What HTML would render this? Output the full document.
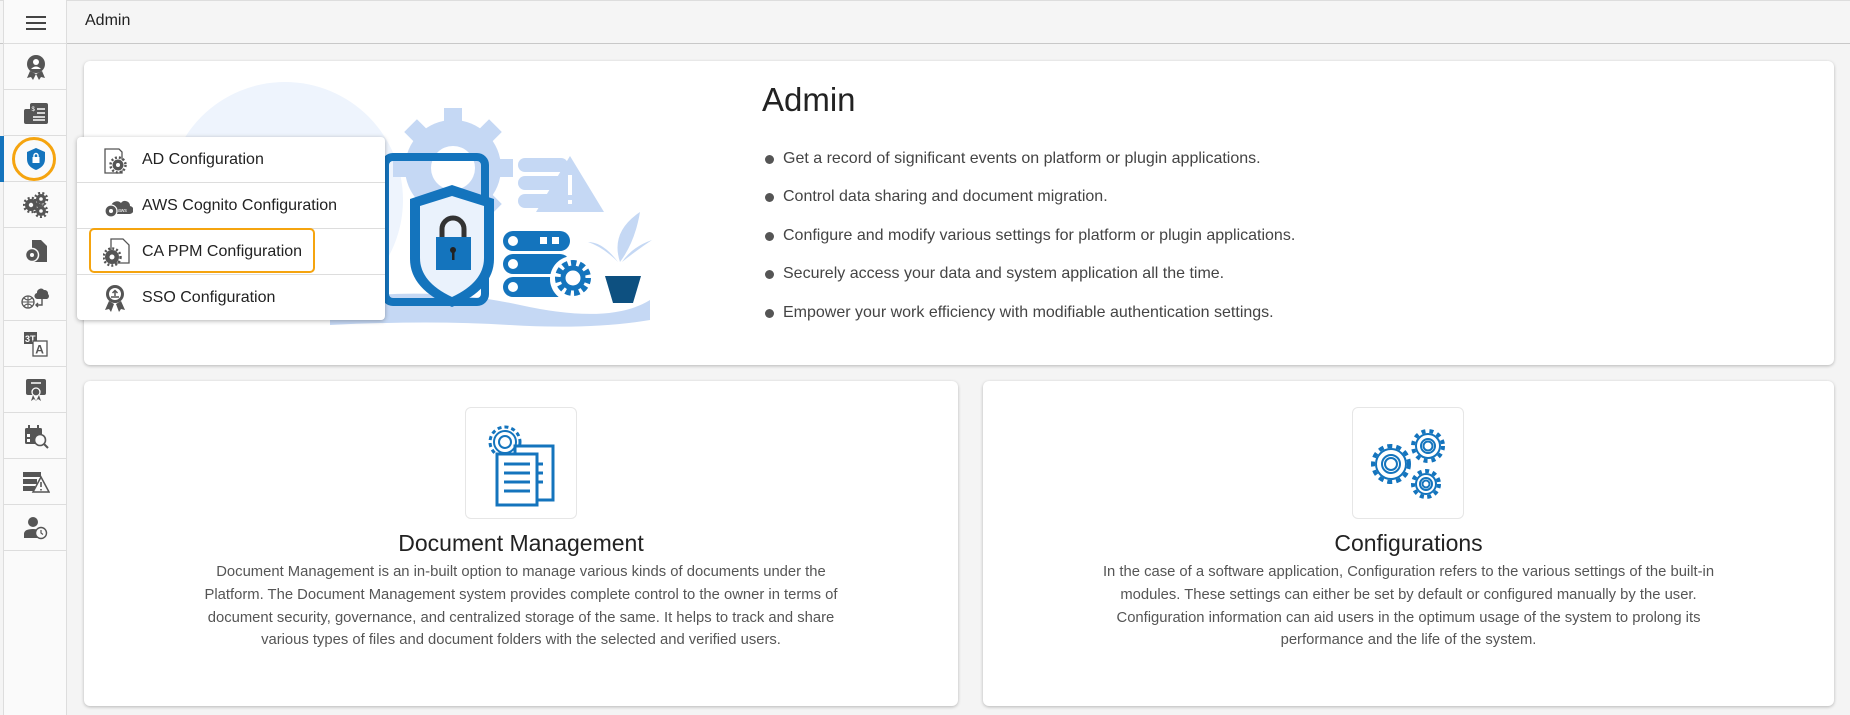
<!DOCTYPE html>
<html><head><meta charset="utf-8"><style>
*{box-sizing:border-box;margin:0;padding:0}
body{width:1850px;height:715px;overflow:hidden;background:#f4f4f4;font-family:"Liberation Sans",sans-serif;position:relative}
.hdr{position:absolute;left:0;top:0;width:1850px;height:44px;background:#f5f5f5;border-bottom:1px solid #c8c8c8;box-shadow:0 1px 0 #ddd inset}
.hdr .t{position:absolute;left:85px;top:12px;font-size:16px;color:#222}
.side{position:absolute;left:3px;top:0;width:64px;height:715px;border-left:1px solid #ddd;border-right:1px solid #ddd;background:#fafafa}
.side .ham{position:absolute;left:22px;top:16px;width:20px}
.side .ham i{display:block;height:2px;background:#444;margin-bottom:4px}
.it{position:absolute;left:0;width:63px;height:46px;border-top:1px solid #ddd;display:flex;align-items:center;justify-content:center}
.card{position:absolute;background:#fff;border-radius:6px;box-shadow:0 1px 3px rgba(0,0,0,.25)}
.menu{position:absolute;left:77px;top:137px;width:308px;height:183px;background:#fff;border-radius:4px;box-shadow:0 1px 5px rgba(0,0,0,.3)}
.mr{height:46px;border-bottom:1px solid #ddd;display:flex;align-items:center;padding-left:65px;font-size:16px;color:#222;position:relative}
.mr:last-child{border-bottom:none}
.mr svg{position:absolute;left:26px;top:11px}
ul{list-style:none;position:absolute;left:762px;top:150px}
li{font-size:16px;color:#444;height:38.4px;position:relative;padding-left:21px}
li:before{content:"";position:absolute;left:3px;top:5px;width:9px;height:9px;border-radius:50%;background:#555}
.ib{position:absolute;border:1px solid #e6e6e6;border-radius:6px;background:#fff}
.h2{position:absolute;font-size:23px;color:#222;text-align:center;width:100%}
.p{position:absolute;font-size:14.8px;color:#555;line-height:22.8px;text-align:center;width:100%;white-space:nowrap}
</style></head><body>
<div class="hdr"><div class="t">Admin</div></div>
<div class="side">
 <div class="ham"><i></i><i></i><i></i></div>
 <div class="it" style="top:43px"><svg width="24" height="26" viewBox="0 0 24 26"><circle cx="12" cy="10" r="9" fill="#555"/><circle cx="12" cy="8" r="3" fill="#fff"/><path d="M7 15q5-5 10 0" fill="#fff"/><path d="M6 17l-3 7 4-1 2 3 3-6M18 17l3 7-4-1-2 3-3-6" fill="#555"/></svg></div>
 <div class="it" style="top:89px"><svg width="26" height="24" viewBox="0 0 26 24"><rect x="1" y="8" width="10" height="15" rx="2" fill="#555"/><rect x="7" y="2" width="18" height="21" rx="2" fill="#555"/><path d="M14 8h8M14 12h8M10 16h12M10 19h12" stroke="#fff" stroke-width="1.5"/><text x="8.5" y="10" font-size="6" fill="#fff" font-family="Liberation Sans">$</text></svg></div>
 <div class="it" style="top:135px"><div style="position:absolute;left:-4px;top:0;width:4px;height:46px;background:#1474bd"></div><div style="position:absolute;left:8px;top:1px;width:44px;height:44px;border:3.5px solid #f5a40f;border-radius:50%"></div><svg width="20" height="24" viewBox="0 0 20 24"><path d="M10 1l9 4v7c0 6-4 9-9 11C5 21 1 18 1 12V5z" fill="#1474bd"/><rect x="6.5" y="10" width="7" height="6" fill="#fff"/><path d="M8 10V8.5a2 2 0 014 0V10" stroke="#fff" stroke-width="1.4" fill="none"/></svg></div>
 <div class="it" style="top:181px"><svg width="26" height="26" viewBox="0 0 26 26"><g fill="#555"><circle cx="8" cy="13" r="6"/><circle cx="18" cy="7" r="5"/><circle cx="18" cy="19" r="5"/></g><g fill="#fafafa"><circle cx="8" cy="13" r="2.2"/><circle cx="18" cy="7" r="1.8"/><circle cx="18" cy="19" r="1.8"/></g><g stroke="#555" stroke-width="2.5" stroke-dasharray="2 2.2" fill="none"><circle cx="8" cy="13" r="7"/><circle cx="18" cy="7" r="6"/><circle cx="18" cy="19" r="6"/></g></svg></div>
 <div class="it" style="top:227px"><svg width="24" height="26" viewBox="0 0 24 26"><path d="M8 2h9l6 6v16H8z" fill="#555"/><circle cx="8" cy="17" r="6.5" fill="#555" stroke="#fafafa" stroke-width="1.5"/><circle cx="8" cy="17" r="2" fill="#fafafa"/></svg></div>
 <div class="it" style="top:274px"><svg width="30" height="26" viewBox="0 0 30 26"><circle cx="7" cy="17" r="6" fill="none" stroke="#555" stroke-width="1.3"/><path d="M1 17h12M7 11v12M3 13q4 4 8 0M3 21q4-4 8 0" stroke="#555" stroke-width="1" fill="none"/><path d="M16 8a4 4 0 017-3 3.5 3.5 0 014 4 3 3 0 01-1 5H17a3 3 0 01-1-6z" fill="#555"/><path d="M21 14v6h-6M17 18l-2 2 2 2" stroke="#555" stroke-width="1.4" fill="none"/></svg></div>
 <div class="it" style="top:320px"><svg width="26" height="26" viewBox="0 0 26 26"><rect x="1" y="1" width="13" height="12" fill="#555"/><text x="2" y="11" font-size="9" fill="#fff" font-family="Liberation Sans" font-weight="bold">3T</text><rect x="10" y="10" width="14" height="15" fill="#fff" stroke="#555" stroke-width="1.3"/><text x="12.3" y="22.5" font-size="12" fill="#555" font-family="Liberation Sans" font-weight="bold">A</text></svg></div>
 <div class="it" style="top:366px"><svg width="24" height="26" viewBox="0 0 24 26"><rect x="2" y="2" width="20" height="16" rx="2" fill="#555"/><path d="M7 6h10" stroke="#fff" stroke-width="1.5"/><circle cx="12" cy="15" r="4" fill="#555" stroke="#fff" stroke-width="1.3"/><path d="M9 18l-2 6 3-2 2 2M15 18l2 6-3-2-2 2" fill="#555"/></svg></div>
 <div class="it" style="top:412px"><svg width="26" height="26" viewBox="0 0 26 26"><rect x="2" y="5" width="17" height="16" rx="1.5" fill="#555"/><path d="M6 2v5M15 2v5" stroke="#555" stroke-width="2"/><rect x="4" y="11" width="3" height="3" fill="#fff"/><rect x="4" y="16" width="3" height="3" fill="#fff"/><circle cx="17" cy="17" r="5.5" fill="#fafafa" stroke="#555" stroke-width="1.6"/><path d="M21 21l4 4" stroke="#555" stroke-width="2"/></svg></div>
 <div class="it" style="top:458px"><svg width="28" height="24" viewBox="0 0 28 24"><rect x="1" y="2" width="18" height="5" fill="#555"/><rect x="1" y="9" width="14" height="5" fill="#555"/><rect x="1" y="16" width="12" height="5" fill="#555"/><path d="M19 7l8 15H11z" fill="#fafafa" stroke="#555" stroke-width="1.5"/><path d="M19 12v5M19 19v1.5" stroke="#555" stroke-width="1.6"/></svg></div>
 <div class="it" style="top:504px"><svg width="26" height="24" viewBox="0 0 26 24"><circle cx="10" cy="6" r="5" fill="#555"/><path d="M1 22v-4q0-5 9-5t9 5v4z" fill="#555"/><circle cx="18" cy="17" r="5.5" fill="#fafafa" stroke="#555" stroke-width="1.4"/><path d="M18 14v3l2 1.5" stroke="#555" stroke-width="1.2" fill="none"/></svg></div>
 <div class="it" style="top:550px;height:1px"></div>
</div>

<div class="card" style="left:84px;top:61px;width:1750px;height:304px">
 <svg style="position:absolute;left:80px;top:0" width="600" height="304" viewBox="164 61 600 304">
  <circle cx="285" cy="200" r="118" fill="#eef4fd"/>
  <g transform="translate(0 16)">
  <g fill="#c5d8f4"><circle cx="453" cy="152" r="48"/><g transform="translate(453 152)"><rect x="-9" y="-60" width="18" height="20"/><rect x="-9" y="-60" width="18" height="20" transform="rotate(45)"/><rect x="-9" y="-60" width="18" height="20" transform="rotate(90)"/><rect x="-9" y="-60" width="18" height="20" transform="rotate(135)"/><rect x="-9" y="-60" width="18" height="20" transform="rotate(-45)"/><rect x="-9" y="-60" width="18" height="20" transform="rotate(-90)"/></g></g>
  <circle cx="453" cy="152" r="22" fill="#fff"/>
  </g>
  <path d="M330 300q100-15 190 5t130-5v20q-60 10-140 5t-180 0z" fill="#c5d8f4"/>
  <rect x="385" y="157" width="100" height="145" rx="8" fill="none" stroke="#1474bd" stroke-width="8"/>
  <path d="M452 185l42 14v60q0 30-42 48q-42-18-42-48v-60z" fill="#1474bd"/>
  <path d="M452 196l32 10v52q0 24-32 39q-32-15-32-39v-52z" fill="#eaf2fc"/>
  <rect x="436" y="237" width="35" height="33" fill="#1474bd"/>
  <path d="M442 237v-8a11 11 0 0122 0v8" stroke="#333" stroke-width="5" fill="none"/>
  <circle cx="453" cy="250" r="3" fill="#222"/><rect x="452" y="250" width="2.5" height="10" fill="#222"/>
  <g fill="#c5d8f4"><rect x="518" y="158" width="50" height="14" rx="7"/><rect x="518" y="176" width="50" height="14" rx="7"/><rect x="518" y="194" width="50" height="14" rx="7"/><path d="M570 156l34 56h-68z"/></g>
  <path d="M570 175v20M570 200v4" stroke="#fff" stroke-width="4"/>
  <g fill="#1474bd"><rect x="503" y="231" width="67" height="20" rx="10"/><rect x="503" y="254" width="67" height="20" rx="10"/><rect x="503" y="277" width="67" height="20" rx="10"/></g>
  <g fill="#fff"><circle cx="513" cy="241" r="5"/><circle cx="513" cy="264" r="5"/><circle cx="513" cy="287" r="5"/><rect x="540" y="237" width="7" height="7"/><rect x="552" y="237" width="7" height="7"/></g>
  <circle cx="573" cy="279" r="23" fill="#fff"/><circle cx="573" cy="278" r="14" fill="none" stroke="#1474bd" stroke-width="8" stroke-dasharray="5 3"/><circle cx="573" cy="278" r="10" fill="none" stroke="#1474bd" stroke-width="5"/>
  <path d="M620 262q-10-30 20-50q-5 30-20 50zM618 262q-15-20-30-20q15 5 30 20zM622 262q10-15 30-22q-15 10-30 22z" fill="#c5d8f4"/>
  <path d="M605 276h36l-8 27h-20z" fill="#0d5080"/>
 </svg>
 <div style="position:absolute;left:678px;top:20px;font-size:33px;color:#222">Admin</div>
</div>
<ul>
<li>Get a record of significant events on platform or plugin applications.</li>
<li>Control data sharing and document migration.</li>
<li>Configure and modify various settings for platform or plugin applications.</li>
<li>Securely access your data and system application all the time.</li>
<li>Empower your work efficiency with modifiable authentication settings.</li>
</ul>

<div class="menu">
 <div class="mr"><svg width="26" height="26" viewBox="0 0 26 26"><path d="M2 1h14l3 3v21H2z" fill="none" stroke="#555" stroke-width="1.3"/><circle cx="15" cy="17" r="6" fill="#555" stroke="#fff" stroke-width="1"/><circle cx="15" cy="17" r="7.5" fill="none" stroke="#555" stroke-width="2.5" stroke-dasharray="2 2"/><circle cx="15" cy="17" r="2" fill="#fff"/></svg>AD Configuration</div>
 <div class="mr"><svg width="30" height="26" viewBox="0 0 30 26"><path d="M8 12a6 6 0 0110-3 5 5 0 019 3 4 4 0 01-1 8H9a4 4 0 01-1-8z" fill="#555"/><circle cx="8" cy="17" r="6" fill="#555" stroke="#fff" stroke-width="1.2"/><circle cx="8" cy="17" r="2" fill="#fff"/><text x="15" y="18" font-size="5" fill="#fff" font-family="Liberation Sans">aws</text></svg>AWS Cognito Configuration</div>
 <div class="mr"><div style="position:absolute;left:12px;top:-1px;width:226px;height:45px;border:2px solid #f5a40f;border-radius:5px"></div><svg width="28" height="30" viewBox="0 0 28 30" style="top:8px"><path d="M8 2h12l6 6v18H8z" fill="#fff" stroke="#555" stroke-width="1.3"/><circle cx="9" cy="20" r="7" fill="#555"/><circle cx="9" cy="20" r="8.5" fill="none" stroke="#555" stroke-width="2.5" stroke-dasharray="2 2"/><circle cx="9" cy="20" r="2.5" fill="#fff"/></svg>CA PPM Configuration</div>
 <div class="mr"><svg width="24" height="30" viewBox="0 0 24 30" style="top:8px"><circle cx="12" cy="11" r="9" fill="#555"/><circle cx="12" cy="11" r="6" fill="#fff"/><path d="M12 8v5M9.5 10l2.5-2.5 2.5 2.5M8 14h8" stroke="#555" stroke-width="1.5" fill="none"/><path d="M6 18l-4 9 4-1 2 3 3-8M18 18l4 9-4-1-2 3-3-8" fill="#555"/></svg>SSO Configuration</div>
</div>

<div class="card" style="left:84px;top:381px;width:874px;height:325px">
 <div class="ib" style="left:381px;top:26px;width:112px;height:112px">
  <svg style="position:absolute;left:19px;top:12px" width="75" height="90" viewBox="0 0 75 90"><circle cx="20" cy="22" r="15" fill="none" stroke="#1474bd" stroke-width="3" stroke-dasharray="4 3"/><circle cx="20" cy="22" r="11" fill="#fff" stroke="#1474bd" stroke-width="2"/><circle cx="20" cy="22" r="6" fill="none" stroke="#1474bd" stroke-width="2"/><rect x="30" y="26" width="38" height="54" fill="#fff" stroke="#1474bd" stroke-width="3"/><rect x="12" y="34" width="40" height="51" fill="#fff" stroke="#1474bd" stroke-width="3"/><path d="M19 44h26M19 53h26M19 62h26M19 71h26M52 44h6M52 53h6M52 62h6" stroke="#1474bd" stroke-width="3"/></svg>
 </div>
 <div class="h2" style="top:149px">Document Management</div>
 <div class="p" style="top:180px">Document Management is an in-built option to manage various kinds of documents under the<br>Platform. The Document Management system provides complete control to the owner in terms of<br>document security, governance, and centralized storage of the same. It helps to track and share<br>various types of files and document folders with the selected and verified users.</div>
</div>
<div class="card" style="left:983px;top:381px;width:851px;height:325px">
 <div class="ib" style="left:369px;top:26px;width:112px;height:112px">
  <svg style="position:absolute;left:16px;top:18px" width="80" height="75" viewBox="0 0 80 75"><g fill="none" stroke="#1474bd" stroke-width="2"><circle cx="22" cy="38" r="18" stroke-width="4" stroke-dasharray="5 4"/><circle cx="22" cy="38" r="15"/><circle cx="22" cy="38" r="9"/><circle cx="22" cy="38" r="6"/><circle cx="59" cy="20" r="15" stroke-width="4" stroke-dasharray="4 4"/><circle cx="59" cy="20" r="12"/><circle cx="59" cy="20" r="7"/><circle cx="59" cy="20" r="4.5"/><circle cx="57" cy="58" r="13" stroke-width="4" stroke-dasharray="4 3.5"/><circle cx="57" cy="58" r="10"/><circle cx="57" cy="58" r="6"/><circle cx="57" cy="58" r="3.5"/></g></svg>
 </div>
 <div class="h2" style="top:149px">Configurations</div>
 <div class="p" style="top:180px">In the case of a software application, Configuration refers to the various settings of the built-in<br>modules. These settings can either be set by default or configured manually by the user.<br>Configuration information can aid users in the optimum usage of the system to prolong its<br>performance and the life of the system.</div>
</div>
</body></html>
